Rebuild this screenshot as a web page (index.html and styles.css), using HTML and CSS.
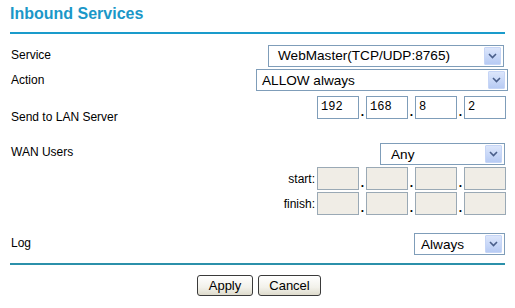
FILE: index.html
```html
<!doctype html>
<html lang="en">
<head>
  <meta charset="utf-8">
  <title>Inbound Services</title>
  <link rel="stylesheet" href="styles.css">
</head>
<body>
	<div class="page">
		<h1 class="title">Inbound Services</h1>
		<div class="rule top"></div>

		<div class="row r-service">
			<span class="label">Service</span>
			<div class="select w-service">
				<span class="value">WebMaster(TCP/UDP:8765)</span>
				<span class="drop"><svg width="9" height="6" viewBox="0 0 9 6"><path d="M1 1 L4.5 4.5 L8 1" fill="none" stroke="#4a5f8a" stroke-width="1.6"/></svg></span>
			</div>
		</div>

		<div class="row r-action">
			<span class="label">Action</span>
			<div class="select w-action">
				<span class="value">ALLOW always</span>
				<span class="drop"><svg width="9" height="6" viewBox="0 0 9 6"><path d="M1 1 L4.5 4.5 L8 1" fill="none" stroke="#4a5f8a" stroke-width="1.6"/></svg></span>
			</div>
		</div>

		<div class="row r-lan">
			<span class="label low">Send to LAN Server</span>
			<div class="ip">
				<span class="box">192</span><span class="dot">.</span>
				<span class="box">168</span><span class="dot">.</span>
				<span class="box">8</span><span class="dot">.</span>
				<span class="box">2</span>
			</div>
		</div>

		<div class="row r-wan">
			<span class="label">WAN Users</span>
			<div class="select w-any">
				<span class="value">Any</span>
				<span class="drop"><svg width="9" height="6" viewBox="0 0 9 6"><path d="M1 1 L4.5 4.5 L8 1" fill="none" stroke="#4a5f8a" stroke-width="1.6"/></svg></span>
			</div>
		</div>

		<div class="row r-range">
			<span class="sub">start:</span>
			<div class="ip off">
				<span class="box"></span><span class="dot">.</span>
				<span class="box"></span><span class="dot">.</span>
				<span class="box"></span><span class="dot">.</span>
				<span class="box"></span>
			</div>
		</div>
		<div class="row r-range">
			<span class="sub">finish:</span>
			<div class="ip off">
				<span class="box"></span><span class="dot">.</span>
				<span class="box"></span><span class="dot">.</span>
				<span class="box"></span><span class="dot">.</span>
				<span class="box"></span>
			</div>
		</div>

		<div class="row r-log">
			<span class="label">Log</span>
			<div class="select w-log">
				<span class="value">Always</span>
				<span class="drop"><svg width="9" height="6" viewBox="0 0 9 6"><path d="M1 1 L4.5 4.5 L8 1" fill="none" stroke="#4a5f8a" stroke-width="1.6"/></svg></span>
			</div>
		</div>

		<div class="rule bottom"></div>

		<div class="buttons">
			<button class="btn b-apply">Apply</button>
			<button class="btn b-cancel">Cancel</button>
		</div>
	</div>
</body>
</html>
```

FILE: styles.css
```css
body {
	margin			: 0;
	background		: #fff;
	font-family		: "Liberation Sans", Arial, sans-serif;
	font-size		: 12px;
	color			: #000;
}

.page {
	width			: 495px;
	padding			: 5px 10px 0 10px;
}

.title {
	margin			: 0;
	height			: 18px;
	font-size		: 16px;
	line-height		: 18px;
	font-weight		: bold;
	color			: #1b97c8;
}

.rule {
	height			: 2px;
}

.rule.top {
	margin-top		: 9px;
	background		: #1a9bcb;
}

.rule.bottom {
	margin-top		: 8px;
	background		: #2b90aa;
}

.row {
	display			: flex;
	justify-content	: space-between;
	align-items		: center;
}

.label {
	padding-left	: 1px;
}

.r-service {
	margin-top		: 10px;
	height			: 23px;
}

.r-service .label {
	margin-top		: -2px;
}

.r-action {
	margin-top		: 2px;
	height			: 22px;
}

.r-action .label {
	margin-top		: -1px;
}

.r-lan {
	margin-top		: 5px;
	height			: 23px;
	align-items		: flex-start;
}

.label.low {
	margin-top		: 14px;
}

.r-wan {
	margin-top		: 24px;
	height			: 22px;
}

.r-wan .label {
	margin-top		: -4px;
}

.r-range {
	justify-content	: flex-end;
	margin-top		: 2px;
	height			: 23px;
}

.r-range + .r-range {
	margin-top		: 2px;
}

.sub {
	margin-right	: 2px;
}

.r-log {
	margin-top		: 18px;
	height			: 22px;
}

.r-log .label {
	margin-top		: -2px;
}

/* dropdowns */
.select {
	box-sizing		: border-box;
	display			: flex;
	align-items		: center;
	justify-content	: space-between;
	height			: 22px;
	border			: 1px solid #7f9db9;
	background		: #fff;
	font-size		: 13.6px;
	padding-left	: 5px;
	padding-right	: 2px;
}

.w-service {
	width			: 236px;
	margin-right	: 1px;
	padding-left	: 9px;
}

.w-action {
	width			: 252px;
	margin-right	: -3px;
	padding-left	: 5px;
}

.w-any {
	width			: 125px;
	padding-left	: 10px;
}

.w-log {
	width			: 91px;
	padding-left	: 6px;
}

.drop {
	display			: flex;
	align-items		: center;
	justify-content	: center;
	width			: 15px;
	height			: 16px;
	background		: linear-gradient(#dce6fb, #b7cbf4);
	border			: 1px solid #c6d5f6;
	border-radius	: 1px;
}

/* ip boxes */
.ip {
	display			: flex;
	align-items		: flex-end;
	margin-right	: -1px;
}

.box {
	box-sizing		: border-box;
	width			: 42px;
	height			: 23px;
	border			: 1px solid #7f9db9;
	background		: #fff;
	font-family		: "Liberation Mono", "Courier New", monospace;
	font-size		: 12px;
	line-height		: 21px;
	padding-left	: 3px;
}

.dot {
	width			: 7px;
	text-align		: center;
	font-weight		: bold;
	line-height		: 14px;
}

.ip.off .box {
	border-color	: #9aa9b5;
	background		: #f0ede6;
}

/* buttons */
.buttons {
	display			: flex;
	justify-content	: center;
	gap				: 5px;
	margin-top		: 10px;
	padding-left	: 3px;
}

.btn {
	height			: 21px;
	padding			: 0;
	border			: 1px solid #3a3a3a;
	border-radius	: 3px;
	background		: linear-gradient(#ffffff, #f2f1ea 60%, #dedbcc);
	font-family		: "Liberation Sans", Arial, sans-serif;
	font-size		: 13px;
	color			: #000;
}

.b-apply {
	width			: 56px;
}

.b-cancel {
	width			: 63px;
}
```
